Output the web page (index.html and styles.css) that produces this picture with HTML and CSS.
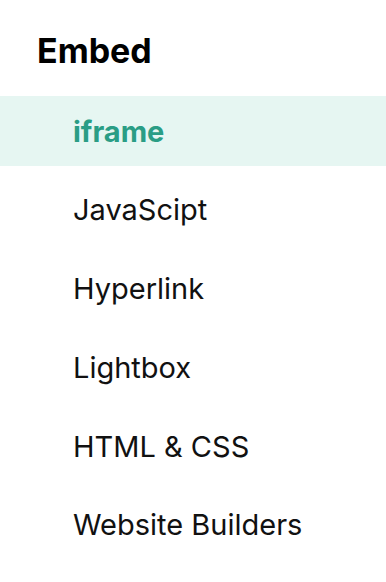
FILE: index.html
```html
<!DOCTYPE html>
<html lang="en">
<head>
<meta charset="utf-8">
<title>Embed</title>
<link rel="stylesheet" href="styles.css">
</head>
<body>
<nav class="embed-menu">
  <h2 class="embed-title">Embed</h2>
  <ul class="embed-list">
    <li class="embed-item is-active">iframe</li>
    <li class="embed-item">JavaScipt</li>
    <li class="embed-item">Hyperlink</li>
    <li class="embed-item">Lightbox</li>
    <li class="embed-item">HTML &amp; CSS</li>
    <li class="embed-item">Website Builders</li>
  </ul>
</nav>
</body>
</html>
```
FILE: styles.css
```css
html, body {
  margin: 0;
  padding: 0;
  background: #ffffff;
}
body {
  font-family: Inter, "Noto Sans", sans-serif;
  color: #111111;
}
.embed-menu {
  width: 386px;
  padding-top: 29px;
}
.embed-title {
  margin: 0 0 23px 0;
  padding-left: 37px;
  font-size: 34px;
  line-height: 44px;
  font-weight: 700;
  color: #000000;
}
.embed-list {
  list-style: none;
  margin: 0;
  padding: 0;
  display: flex;
  flex-direction: column;
  gap: 8.75px;
}
.embed-item {
  height: 70px;
  display: flex;
  align-items: center;
  padding-left: 73px;
  font-size: 29px;
  font-weight: 400;
  color: #111111;
}
.embed-item.is-active {
  background: #e6f6f2;
  color: #2a9d85;
  font-weight: 700;
}
```
